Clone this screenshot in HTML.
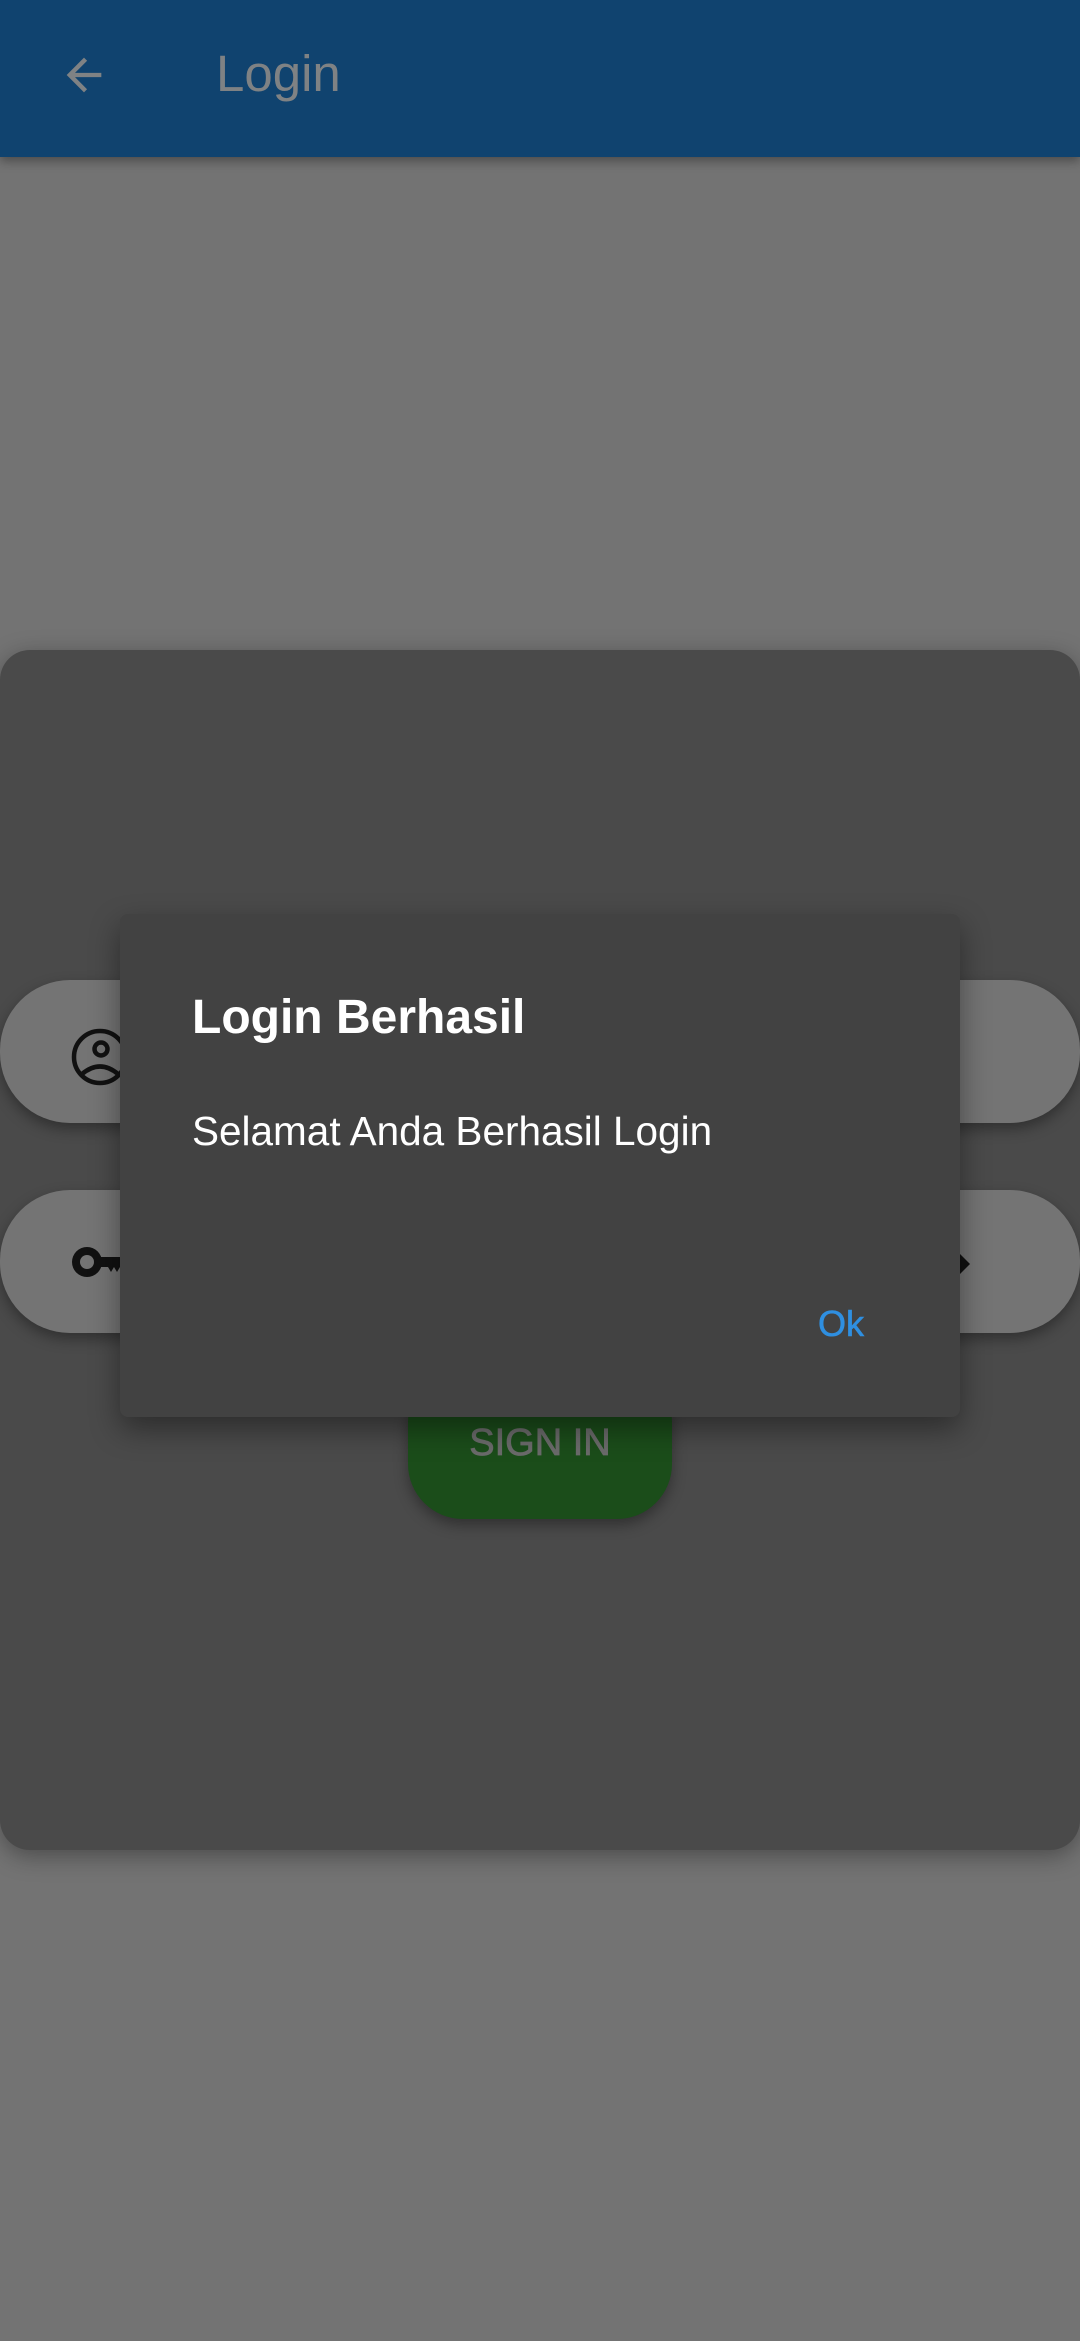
<!DOCTYPE html>
<html><head><meta charset="utf-8"><style>
*{margin:0;padding:0;box-sizing:border-box}
body{width:1080px;height:2341px;background:#737373;position:relative;overflow:hidden;font-family:"Liberation Sans",Roboto,sans-serif}
.bar{position:absolute;left:0;top:0;width:1080px;height:157px;background:#10436f;box-shadow:0 4px 10px rgba(0,0,0,.35)}
.bar .t{position:absolute;left:216px;top:44px;font-size:51px;color:#7f8284;line-height:60px}
.card{position:absolute;left:0;top:650px;width:1080px;height:1200px;background:#4a4a4a;border-radius:30px;box-shadow:0 6px 24px rgba(0,0,0,.35)}
.field{position:absolute;left:0;width:1080px;height:143px;background:#747474;border-radius:70px;box-shadow:0 6px 14px rgba(0,0,0,.35)}
.btn{position:absolute;left:408px;top:1367px;width:264px;height:152px;background:#1b4d1a;border-radius:55px;box-shadow:0 6px 14px rgba(0,0,0,.35)}
.btn span{position:absolute;left:0;right:0;top:54px;text-align:center;font-size:38px;color:#6b6b6b;line-height:44px;-webkit-text-stroke:0.8px #6b6b6b}
.dlg{position:absolute;left:120px;top:914px;width:840px;height:503px;background:#424242;border-radius:8px;box-shadow:0 12px 30px rgba(0,0,0,.4)}
.dlg .h{position:absolute;left:72px;top:74px;font-size:48px;font-weight:bold;color:#fff;line-height:60px}
.dlg .c{position:absolute;left:72px;top:193px;font-size:40.5px;color:#fff;line-height:48px}
.dlg .ok{position:absolute;left:698px;top:388px;font-size:36px;color:#2f8fe0;line-height:44px;-webkit-text-stroke:0.6px #2f8fe0}
</style></head><body>
<div class="bar">
<svg style="position:absolute;left:58px;top:49px" width="52" height="52" viewBox="0 0 48 48"><path d="M40 22H15.7l11.2-11.2L24 8 8 24l16 16 2.8-2.8L15.7 26H40z" fill="#7f8284"/></svg>
<div class="t">Login</div>
</div>
<div class="card"></div>
<div class="field" style="top:980px"></div>
<div class="field" style="top:1190px"></div>
<svg style="position:absolute;left:70px;top:1027px" width="60" height="60" viewBox="0 0 60 60"><circle cx="30" cy="30" r="26" fill="none" stroke="#111" stroke-width="4.5"/><circle cx="31" cy="22" r="6.5" fill="none" stroke="#111" stroke-width="4.5"/><path d="M12 47 Q30 32 48 47" fill="none" stroke="#111" stroke-width="4.5"/></svg>
<svg style="position:absolute;left:66px;top:1244px" width="60" height="40" viewBox="0 0 60 40"><circle cx="21" cy="18" r="15" fill="#111"/><circle cx="21" cy="18" r="7" fill="#747474"/><path d="M32 13h28v10h-6l-3 5-3-5-3 5-3-5h-10z" fill="#111"/></svg>
<svg style="position:absolute;left:940px;top:1244px" width="40" height="40" viewBox="0 0 40 40"><path d="M10 20 L20 10 L30 20 L20 30Z" fill="#111"/></svg>
<div class="btn"><span>SIGN IN</span></div>
<div class="dlg">
<div class="h">Login Berhasil</div>
<div class="c">Selamat Anda Berhasil Login</div>
<div class="ok">Ok</div>
</div>
</body></html>
